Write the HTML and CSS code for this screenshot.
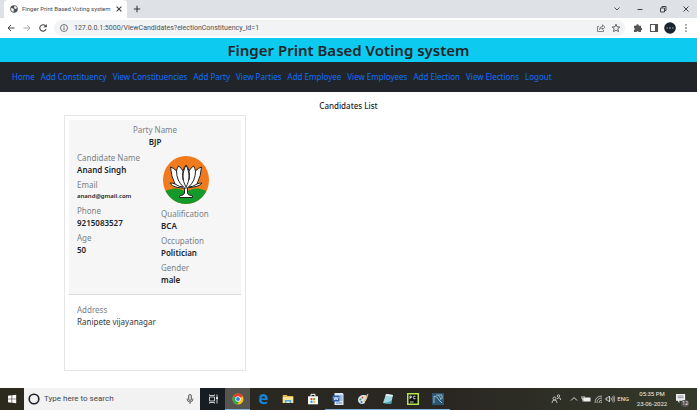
FILE: index.html
```html
<!DOCTYPE html>
<html lang="en">
<head>
    <meta charset="UTF-8">
    <meta name="viewport" content="width=device-width, initial-scale=1.0">
    <title>Finger Print Based Voting system</title>
    <link rel="stylesheet" href="styles.css">
</head>
<body>
    <!-- browser window -->
    <div class="tabbar">
        <div class="tab">
            <svg class="globe" viewBox="0 0 16 16"><circle cx="8" cy="8" r="7.5" fill="#4d5156"/><path d="M2 6l4 1 2 2-1 2v3L3 12zM8 2l4 1 2 3-3 2-3-2 1-2z" fill="#fff"/></svg>
            <span class="tab-title">Finger Print Based Voting system</span>
            <button class="tab-close" aria-label="Close tab"><svg viewBox="0 0 10 10"><path d="M2 2l6 6M8 2l-6 6" stroke="#444" stroke-width="1.4"/></svg></button>
        </div>
        <button class="new-tab" aria-label="New tab"><svg viewBox="0 0 10 10"><path d="M5 1v8M1 5h8" stroke="#333" stroke-width="1.3"/></svg></button>
        <div class="window-buttons">
            <button aria-label="Search tabs"><svg viewBox="0 0 10 10"><path d="M2.500 3.500l2.500 2.500 2.500-2.500" fill="none" stroke="#555"/></svg></button>
            <button aria-label="Minimize"><svg viewBox="0 0 10 10"><path d="M2.500 5.500h5" stroke="#444"/></svg></button>
            <button aria-label="Restore"><svg viewBox="0 0 10 10"><path d="M2.500 4h4v4h-4zM4 4V2.500h4v4H6.500" fill="none" stroke="#444"/></svg></button>
            <button aria-label="Close"><svg viewBox="0 0 10 10"><path d="M2.500 2.500l5 5M7.500 2.500l-5 5" stroke="#444"/></svg></button>
        </div>
    </div>
    <div class="toolbar">
        <button aria-label="Back"><svg viewBox="0 0 10 10"><path d="M8.500 5H2M5 2L2 5l3 3" fill="none" stroke="#444"/></svg></button>
        <button aria-label="Forward"><svg viewBox="0 0 10 10"><path d="M1.500 5H8M5 2l3 3-3 3" fill="none" stroke="#aaa"/></svg></button>
        <button aria-label="Reload"><svg viewBox="0 0 10 10"><path d="M8 6A3.200 3.200 0 1 1 7.300 2.700" fill="none" stroke="#444" stroke-width="1.100"/><path d="M8.800 1v3.200H5.600z" fill="#444"/></svg></button>
        <div class="address">
            <svg viewBox="0 0 10 10"><circle cx="5" cy="5" r="3.500" fill="none" stroke="#555" stroke-width=".8"/><path d="M5 4.500V7M5 2.800v1" stroke="#555" stroke-width=".9"/></svg>
            <input type="text" class="url" aria-label="Address bar" value="127.0.0.1:5000/ViewCandidates?electionConstituency_id=1">
            <button aria-label="Share"><svg viewBox="0 0 10 10"><path d="M3 3.500H1.500v5h6V7M3.500 6.500q0-3 3-3V1.800L9 4.200 6.500 6.500V5q-2 0-3 1.500z" fill="none" stroke="#666" stroke-width=".8"/></svg></button>
            <button aria-label="Bookmark"><svg viewBox="0 0 10 10"><path d="M5 1.200l1.100 2.600 2.800.2-2.100 1.800.7 2.800L5 7.100 2.500 8.600l.7-2.800L1.100 4l2.800-.2z" fill="none" stroke="#555" stroke-width=".9"/></svg></button>
        </div>
        <button aria-label="Extensions"><svg viewBox="0 0 10 10"><path d="M1 2.800h2.300a1.300 1.300 0 1 1 2.500 0H8v2a1.200 1.200 0 1 1 0 2.400V9H5.800a1.200 1.200 0 0 0-2.300 0H1V6.900a1.100 1.100 0 0 0 0-2.100z" fill="#555"/></svg></button>
        <button aria-label="Side panel"><svg viewBox="0 0 10 10"><path d="M1.500 1.500h7v7h-7z" fill="none" stroke="#555" stroke-width="1.100"/><path d="M6 1.500h2.500v7H6z" fill="#555"/></svg></button>
        <button class="profile" aria-label="Profile"><svg viewBox="0 0 12 12"><circle cx="6" cy="6" r="5.800" fill="#182430"/><path d="M2.500 6h1.500M5 6h2M8 6h1.500" stroke="#9fb0bb"/></svg></button>
        <button aria-label="Menu"><svg viewBox="0 0 10 10"><path d="M5 1.200v1.400M5 4.300v1.400M5 7.400v1.400" stroke="#555" stroke-width="1.400"/></svg></button>
    </div>

    <header class="banner">
        <h1>Finger Print Based Voting system</h1>
    </header>
    <nav class="menu">
        <a href="#">Home</a>
        <a href="#">Add Constituency</a>
        <a href="#">View Constituencies</a>
        <a href="#">Add Party</a>
        <a href="#">View Parties</a>
        <a href="#">Add Employee</a>
        <a href="#">View Employees</a>
        <a href="#">Add Election</a>
        <a href="#">View Elections</a>
        <a href="#">Logout</a>
    </nav>

    <main class="content">
        <h2>Candidates List</h2>
        <div class="card">
            <div class="card-top">
                <div class="party">
                    <div class="label">Party Name</div>
                    <div class="value">BJP</div>
                </div>
                <div class="details">
                    <div class="column">
                        <div class="field">
                            <div class="label">Candidate Name</div>
                            <div class="value">Anand Singh</div>
                        </div>
                        <div class="field">
                            <div class="label">Email</div>
                            <div class="value email">anand@gmail.com</div>
                        </div>
                        <div class="field">
                            <div class="label">Phone</div>
                            <div class="value">9215083527</div>
                        </div>
                        <div class="field">
                            <div class="label">Age</div>
                            <div class="value">50</div>
                        </div>
                    </div>
                    <div class="column">
                        <svg class="symbol" viewBox="0 0 46 48">
                            <defs><clipPath id="disc"><ellipse cx="23" cy="24" rx="23" ry="24"/></clipPath></defs>
                            <g clip-path="url(#disc)">
                                <path d="M0 0h46v48H0z" fill="#f07a1c"/>
                                <path d="M0 36q8-4 14-3.500 5 .5 9 3.500 4-3 9-3.500 6-.5 14 3.500v13H0z" fill="#149a2b"/>
                            </g>
                            <g fill="#fff" stroke="#222" stroke-width="1" stroke-linejoin="round">
                                <path d="M21.500 31h3v6q0 2 5 3v1.500h-13V40q5-1 5-3z"/>
                                <path d="M23 32C15 32 9 31 7 27q3 0 5 1-4-8-4.500-17 3.500 1 6 4 .5-3 2-5 3 2 4.500 5 1-4 3-6 2 2 3 6 1.500-3 4.500-5 1.500 2 2 5 2.500-3 6-4Q38 20 34 28q2-1 5-1-2 4-16 5z"/>
                                <path d="M23 31c-4-7-4-14 0-22 4 8 4 15 0 22z"/>
                                <path d="M13.500 15q0 10 7 16M32.500 15q0 10-7 16M20 15q-1 4 0 9M26 15q1 4 0 9M12 28q4 3 8.500 3M34 28q-4 3-8.500 3" fill="none"/>
                            </g>
                        </svg>
                        <div class="field">
                            <div class="label">Qualification</div>
                            <div class="value">BCA</div>
                        </div>
                        <div class="field">
                            <div class="label">Occupation</div>
                            <div class="value">Politician</div>
                        </div>
                        <div class="field">
                            <div class="label">Gender</div>
                            <div class="value">male</div>
                        </div>
                    </div>
                </div>
            </div>
            <div class="card-bottom">
                <div class="label">Address</div>
                <div class="street">Ranipete vijayanagar</div>
            </div>
        </div>
    </main>

    <!-- windows taskbar -->
    <footer class="taskbar">
        <button class="start" aria-label="Start"><svg viewBox="0 0 12 12"><path d="M2 2.800l3.600-.5v3.400H2zM6.200 2.200L10.200 1.700v4h-4zM2 6.300h3.600v3.400L2 9.200zM6.200 6.300h4v4l-4-.5z" fill="#fff"/></svg></button>
        <div class="search">
            <svg viewBox="0 0 12 12"><circle cx="6" cy="6" r="4.800" fill="none" stroke="#1c1f24" stroke-width="1.600"/></svg>
            <input type="text" aria-label="Search" placeholder="Type here to search">
            <svg viewBox="0 0 12 12"><rect x="4.500" y="1.500" width="3" height="6" rx="1.500" fill="#ccc" stroke="#555" stroke-width=".8"/><path d="M3 5.500q0 3.500 3 3.500t3-3.500M6 9v2" fill="none" stroke="#555" stroke-width=".9"/></svg>
        </div>
        <button class="app task-view" aria-label="Task view"><svg viewBox="0 0 12 12"><path d="M2.500 4h5v4h-5zM2.500 1.500v1h5v-1M2.500 10.500v-1h5v1M10 1.500v9" fill="none" stroke="#ddd" stroke-width=".9"/><path d="M9.300 4h1.500v2H9.300z" fill="#fff"/></svg></button>
        <button class="app open active" aria-label="Chrome"><svg viewBox="0 0 12 12"><circle cx="6" cy="6" r="5.500" fill="#fbc116"/><path d="M6 6L1.200 3.300A5.500 5.500 0 0 1 10.800 3.300z" fill="#e33b2e"/><path d="M6 6L1.200 3.300A5.500 5.500 0 0 0 5.500 11.500L7.500 7z" fill="#2da94f"/><circle cx="6" cy="6" r="2.700" fill="#fff"/><circle cx="6" cy="6" r="2" fill="#3b7ded"/></svg></button>
        <button class="app" aria-label="Edge"><svg viewBox="0 0 12 12"><path d="M1.500 5.500C2.200 2.300 4 1 6.300 1c3 0 4.500 2.200 4.500 5v1H4.500c.2 2.500 3.800 2.700 5.600 1.400v2.200C6.500 12.300 2 11 2 7.200c0-1.800 1-3.200 2.500-3.800-1.300.1-2.300.9-3 2.100zM4.600 5.200h3.500c0-2.400-3.200-2.300-3.500 0z" fill="#1583d8"/></svg></button>
        <button class="app" aria-label="File Explorer"><svg viewBox="0 0 12 12"><path d="M.8 2h4l.8 1h5.600v7H.8z" fill="#e8b84c"/><path d="M.8 4h10.400v6H.8z" fill="#fbe49a"/><path d="M2.800 10V7h6.400v3H7.700V8.500H4.300V10z" fill="#49a8dd"/></svg></button>
        <button class="app" aria-label="Store"><svg viewBox="0 0 12 12"><path d="M4 3.500V1.300h4v2.200" fill="none" stroke="#fff"/><path d="M1 3.300h10v8H1z" fill="#fff"/><path d="M3.500 5h2v2h-2z" fill="#e04a31"/><path d="M6.200 5h2v2h-2z" fill="#67a52c"/><path d="M3.500 7.700h2v2h-2z" fill="#258cc9"/><path d="M6.200 7.700h2v2h-2z" fill="#e4b12b"/></svg></button>
        <button class="app open" aria-label="Word"><svg viewBox="0 0 12 12"><path d="M2.500 0h8l1 1v11h-9z" fill="#d9e7f6"/><path d="M7.500 3h3M7.500 5h3M7.500 7h3M4 10h6" stroke="#3c73b6" stroke-width=".8"/><path d="M.5 2.500h7v6h-7z" fill="#2b60b0"/><path d="M1.800 4l1 3 1.200-3 1.200 3 1-3" fill="none" stroke="#fff" stroke-width=".8"/></svg></button>
        <button class="app open" aria-label="Paint"><svg viewBox="0 0 12 12"><path d="M1 7c0-3 2.500-5 6-5 3 0 4 1.500 3 3.500S8 8 8 9s-1 2-3 2-4-1.500-4-4z" fill="#d7e4ec"/><circle cx="3.500" cy="6.500" r="1" fill="#35a356"/><circle cx="5.500" cy="4.500" r="1" fill="#e04a31"/><circle cx="4.500" cy="9" r="1" fill="#3474c7"/><path d="M7 9l4-8" stroke="#e8bd73" stroke-width="1.200"/></svg></button>
        <button class="app open" aria-label="Notepad"><svg viewBox="0 0 12 12"><path d="M4 1l7 1-2 9-8-1z" fill="#9fd6e2"/><path d="M4 1l7 1-.4 1.600-7-.8z" fill="#e9f4f5"/><path d="M1 10l8 1 1-4q-3 3-9 3z" fill="#3b9cae"/></svg></button>
        <button class="app open" aria-label="PyCharm"><svg viewBox="0 0 12 12"><path d="M0 0h12v12H0z" fill="#b5e64a"/><path d="M1.500 1.500h9v9h-9z" fill="#111"/><path d="M3 6V3h1.200q1.200.8 0 1.600H3M8.500 3.300Q6.300 2.500 6.300 4.500t2.200 1.200M3 9h3.500" fill="none" stroke="#fff" stroke-width=".8"/></svg></button>
        <button class="app open" aria-label="MySQL Workbench"><svg viewBox="0 0 12 12"><path d="M0 0h12v12H0z" fill="#2c5572"/><path d="M2 10V3q3 0 5 4l3 3M4 2q4 0 5 5M6 2h4v4" fill="none" stroke="#a4c5d8" stroke-width=".9"/></svg></button>
        <div class="tray">
            <button class="people" aria-label="People"><svg viewBox="0 0 10 10"><circle cx="3.500" cy="4.500" r="1.500" fill="none" stroke="#ddd" stroke-width=".8"/><circle cx="7.500" cy="2" r="1.200" fill="none" stroke="#ddd" stroke-width=".8"/><path d="M1 9q0-3 2.500-3T6 9M6 5q1-2 3.500-.5V6" fill="none" stroke="#ddd" stroke-width=".8"/></svg></button>
            <button aria-label="Show hidden icons"><svg viewBox="0 0 10 10"><path d="M2 6.500L5 3.500l3 3" fill="none" stroke="#ddd"/></svg></button>
            <button aria-label="Battery"><svg viewBox="0 0 10 10"><path d="M2.500 3.500h7v4h-7z" fill="#eee"/><path d="M1 2v3h2V2M2 5v2.500" fill="none" stroke="#eee" stroke-width=".9"/></svg></button>
            <button aria-label="Network"><svg viewBox="0 0 10 10"><path d="M2 9Q2 2 9 2M4 9q0-5 5-5M6 9q0-3 3-3M8 9V8h1" fill="none" stroke="#ccc" stroke-width=".8"/></svg></button>
            <button aria-label="Volume"><svg viewBox="0 0 10 10"><path d="M1 4h1.500l2-2v6l-2-2H1z" fill="none" stroke="#eee" stroke-width=".8"/><path d="M6 3.500q1 1.500 0 3M7.500 2.500q1.500 2.500 0 5M8.800 1.500q2 3.500 0 7" fill="none" stroke="#ddd" stroke-width=".7"/></svg></button>
            <span class="lang">ENG</span>
            <div class="clock">
                <div>05:35 PM</div>
                <div>23-06-2022</div>
            </div>
            <button class="notice" aria-label="Notifications"><svg viewBox="0 0 12 12"><path d="M0 0h11v8H4v3L2 8H0z" fill="#eee"/><path d="M2 2.500h7M2 4.500h7" stroke="#666" stroke-width=".8"/></svg><span class="count">12</span></button>
        </div>
    </footer>
</body>
</html>
```

FILE: styles.css
```css
* {
    box-sizing: border-box;
}

body {
    margin: 0;
    min-height: 100vh;
    display: flex;
    flex-direction: column;
    font-family: "Noto Sans", "Open Sans", sans-serif;
    font-size: 8px;
    line-height: 12px;
    color: #212529;
    background-color: #fff;
}

button {
    display: flex;
    align-items: center;
    justify-content: center;
    padding: 0;
    border: none;
    background: none;
    font: inherit;
    color: inherit;
}

input {
    flex: 1;
    min-width: 0;
    padding: 0;
    border: none;
    outline: none;
    background: none;
    font: inherit;
}

svg {
    display: block;
    flex: none;
    width: 10px;
    height: 10px;
}

/* browser window */
.tabbar {
    display: flex;
    align-items: center;
    height: 18px;
    padding-left: 4px;
    background-color: #dee1e6;
}

.tab {
    display: flex;
    align-items: center;
    width: 123px;
    height: 18px;
    padding: 0 4px 0 6px;
    border-radius: 4px 4px 0 0;
    background-color: #fff;
}

.globe {
    width: 8px;
    height: 8px;
}

.tab-title {
    flex: 1;
    padding-left: 4px;
    font-family: Roboto, sans-serif;
    font-size: 6px;
    color: #45494d;
    white-space: nowrap;
}

.tab-close svg {
    width: 8px;
    height: 8px;
}

.new-tab {
    margin-left: 6px;
}

.new-tab svg {
    width: 8px;
    height: 8px;
}

.window-buttons {
    display: flex;
    margin-left: auto;
}

.window-buttons button {
    width: 23px;
    height: 14px;
}

.toolbar {
    display: flex;
    align-items: center;
    gap: 6px;
    height: 20px;
    padding: 0 6px;
}

.toolbar > button {
    width: 10px;
}

.toolbar .profile svg {
    width: 12px;
    height: 12px;
}

.address {
    flex: 1;
    display: flex;
    align-items: center;
    gap: 5px;
    height: 16px;
    margin-right: 2px;
    padding: 0 4px 0 5px;
    border-radius: 8px;
    background-color: #f1f3f4;
}

.url {
    font-family: Roboto, sans-serif;
    font-size: 7px;
    color: #4d5156;
}

/* page */
.banner {
    height: 24px;
    background-color: #0dcaf0;
    text-align: center;
}

.banner h1 {
    margin: 0;
    font-size: 15px;
    line-height: 25px;
    font-weight: 600;
}

.menu {
    display: flex;
    align-items: center;
    gap: 6px;
    height: 30px;
    padding: 0 12px;
    background-color: #212529;
}

.menu a {
    color: #0d6efd;
    text-decoration: none;
    white-space: nowrap;
}

.content {
    flex: 1;
    padding: 8px 64px 16px;
}

.content h2 {
    margin: 0;
    font-size: 8px;
    line-height: 12px;
    font-weight: 500;
    text-align: center;
}

.card {
    width: 182px;
    min-height: 256px;
    margin-top: 3px;
    padding: 4px;
    border: 1px solid #e6e6e6;
}

.card-top {
    padding: 4px 8px 8px;
    border-bottom: 1px solid #dcdcdc;
    background-color: #f6f6f6;
}

.party {
    text-align: center;
}

.details {
    display: grid;
    grid-template-columns: 1fr 1fr;
    gap: 12px;
    margin-top: 4px;
}

.column {
    display: flex;
    flex-direction: column;
    gap: 3px;
}

.label {
    color: #7b8187;
}

.value {
    font-weight: 600;
}

.email {
    font-size: 6px;
    line-height: 11px;
}

.symbol {
    width: 46px;
    height: 48px;
    margin: 4px 0 1px 2px;
}

.card-bottom {
    padding: 9px 8px;
}

.street {
    color: #33383c;
}

/* taskbar */
.taskbar {
    display: flex;
    align-items: stretch;
    height: 22px;
    background: linear-gradient(to right, #292820, #2a2722 65%, #343a2a);
    color: #eee;
}

.taskbar svg {
    width: 12px;
    height: 12px;
}

.start {
    width: 24px;
    background-color: #2c2a1c;
}

.search {
    display: flex;
    align-items: center;
    gap: 4px;
    width: 176px;
    padding: 0 4px;
    background-color: #f2f2f2;
    font-family: Roboto, sans-serif;
}

.search input::placeholder {
    color: #44474a;
    opacity: 1;
}

.app {
    width: 25px;
}

.task-view {
    background-color: #171d20;
}

.open {
    border-bottom: 1px solid #7cb5e4;
}

.active {
    background-color: #55544f;
}

.tray {
    display: flex;
    align-items: center;
    gap: 2px;
    margin-left: auto;
    padding-right: 10px;
}

.tray svg {
    width: 10px;
    height: 10px;
}

.people {
    margin-right: 6px;
}

.lang,
.clock {
    font-family: Roboto, sans-serif;
    font-size: 6px;
}

.clock {
    width: 42px;
    line-height: 10px;
    text-align: center;
}

.notice {
    position: relative;
    width: 12px;
}

.count {
    position: absolute;
    right: -2px;
    bottom: -3px;
    padding: 0 1px;
    border-radius: 4px;
    background-color: #555;
    font-size: 5px;
    line-height: 7px;
}
```
